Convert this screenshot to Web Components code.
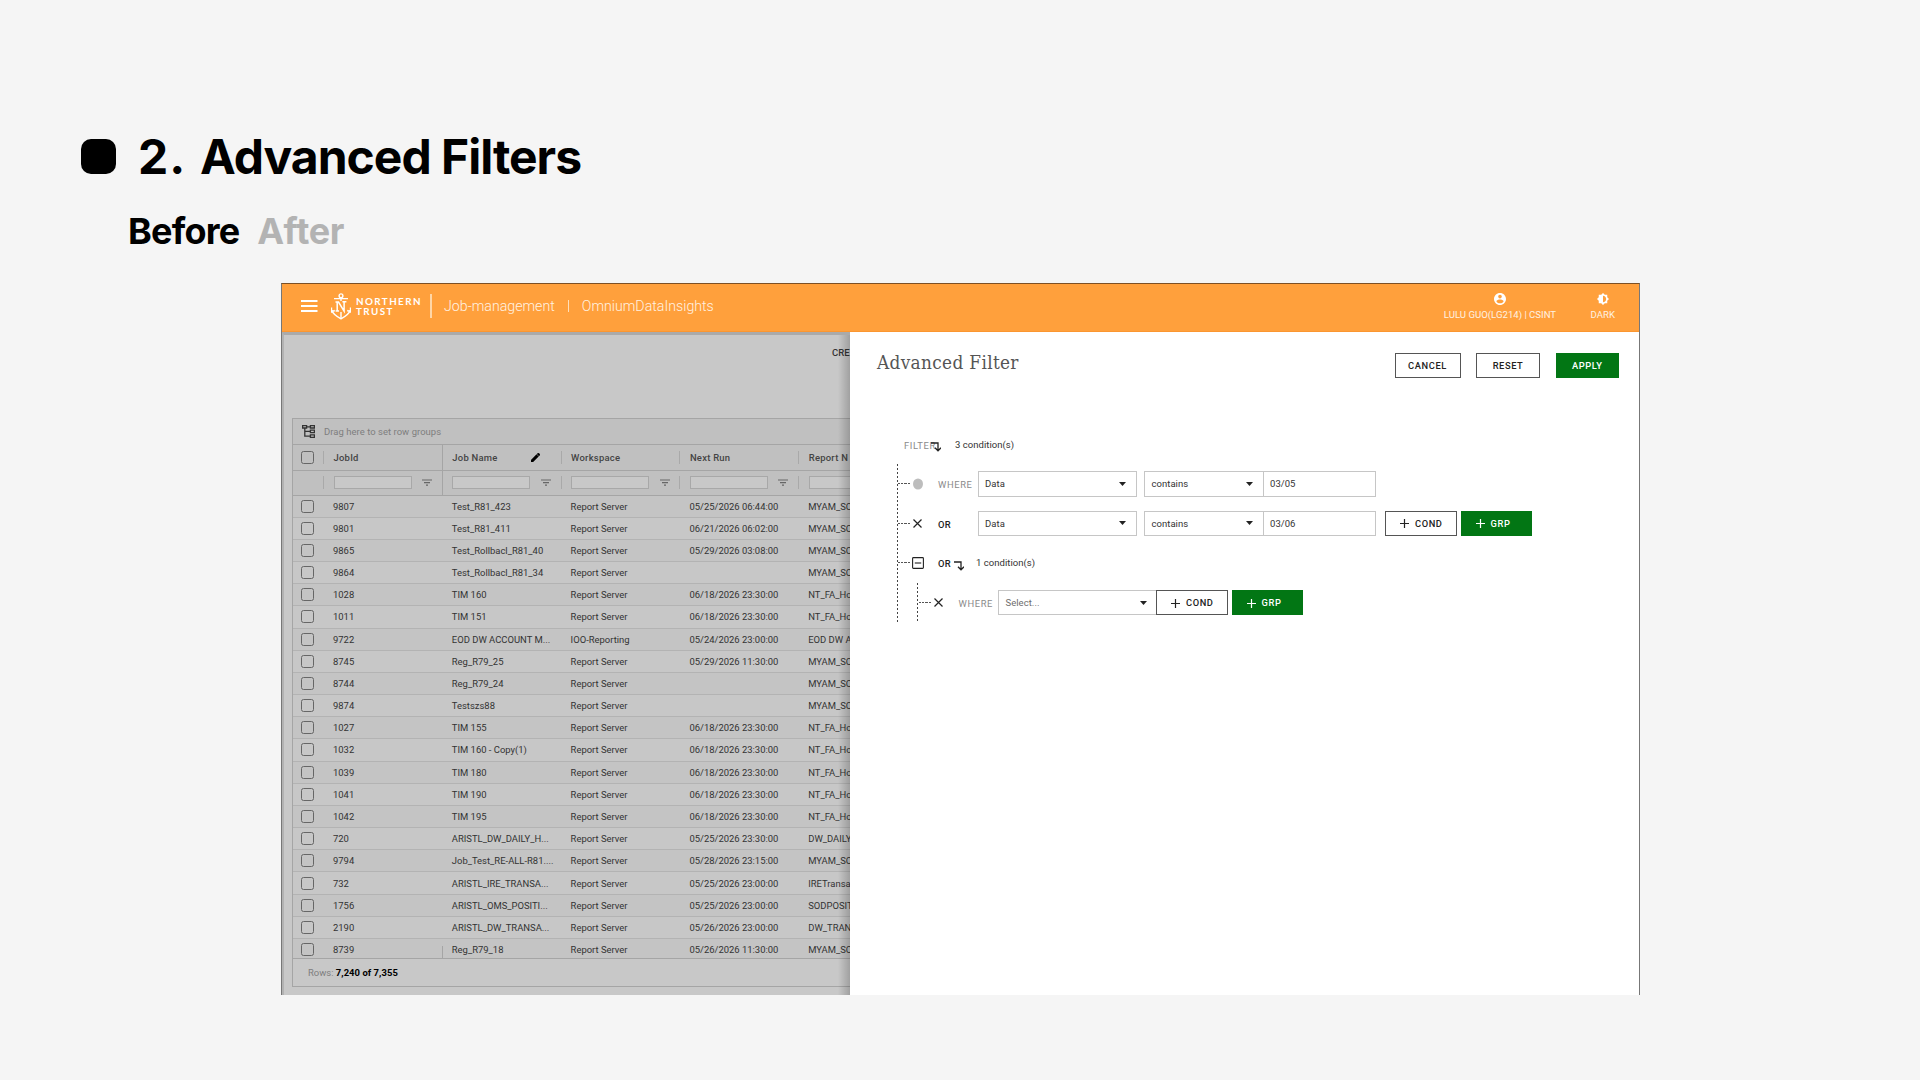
<!DOCTYPE html>
<html lang="en">
<head>
<meta charset="utf-8">
<title>Advanced Filters</title>
<style>
  body {
    margin: 0;
    width: 1920px;
    height: 1080px;
    overflow: hidden;
    background: #f5f5f5;
    font-family: Roboto, "Liberation Sans", sans-serif;
  }
</style>
</head>
<body>
<case-slide>
  <slide-heading number="2.">Advanced Filters</slide-heading>
  <slide-tabs active="Before" other="After"></slide-tabs>
  <app-window></app-window>
</case-slide>

<script>
const define = (name, template) => {
  customElements.define(name, class extends HTMLElement {
    constructor() {
      super();
      this._shadowDOM = this.attachShadow({ mode: 'open' });
    }

    connectedCallback() {
      this._shadowDOM.innerHTML = template(this);
    }
  });
};

define('case-slide', () => `
  <style>
    :host { display: flex; flex-direction: column; height: 1080px; }
  </style>
  <slot></slot>
`);

define('slide-heading', (el) => `
  <style>
    :host {
      display: flex;
      align-items: center;
      height: 58px;
      padding: 128px 0 0 81px;
      font: 700 48px/58px Inter, sans-serif;
      color: #000;
      white-space: nowrap;
    }
    .mark { width: 35px; height: 35px; border-radius: 10px; background: #000; margin: -2px 22px 0 0; }
    .number { width: 62px; letter-spacing: 1px; }
    .title { letter-spacing: -1px; }
  </style>
  <span class="mark"></span>
  <span class="number">${el.getAttribute('number')}</span>
  <span class="title"><slot></slot></span>
`);

define('slide-tabs', (el) => `
  <style>
    :host {
      display: flex;
      height: 44px;
      padding: 23px 0 0 128px;
      gap: 18px;
      font: 700 36px/44px Inter, sans-serif;
      letter-spacing: -.8px;
      color: #000;
    }
    .other { color: #b3b3b3; letter-spacing: -.3px; }
  </style>
  <span>${el.getAttribute('active')}</span>
  <span class="other">${el.getAttribute('other')}</span>
`);

define('app-window', () => `
  <style>
    :host {
      display: flex;
      flex-direction: column;
      box-sizing: border-box;
      width: 1359px;
      height: 712px;
      margin: 30px 0 0 281px;
      border: 1px solid #777;
      border-top-color: #7d5024;
      border-bottom: none;
      overflow: hidden;
    }
    .body { display: flex; flex: 1; min-height: 0; }
  </style>
  <app-header></app-header>
  <div class="body">
    <job-page></job-page>
    <filter-panel></filter-panel>
  </div>
`);

define('app-header', () => `
  <style>
    :host {
      display: flex;
      align-items: center;
      box-sizing: border-box;
      height: 47.500px;
      padding: 0 24px 0 19px;
      background: #ffa03c;
      border-bottom: 1px solid #fb9630;
      color: #fff2e2;
      white-space: nowrap;
    }
    .menu { display: block; margin-right: 13px; margin-top: -2px; }
    .logo { display: block; margin-right: 5px; margin-top: -2px; }
    .brand {
      width: 74px;
      margin-top: -1px;
      font: 700 9.800px/9.800px Lato, sans-serif;
      letter-spacing: 1.420px;
      color: #fff;
    }
    .rule { width: 2px; height: 24px; margin: -2px 12px 0 0; background: #ffd6a6; }
    .crumbs { display: flex; align-items: center; gap: 13px; font-size: 14.200px; font-weight: 300; margin-top: -2px; }
    .crumbs i { width: 1px; height: 12px; background: #ffdfba; }
    .actions { display: flex; margin-left: auto; gap: 34.500px; font-size: 9.600px; line-height: 12px; margin-top: -1px; }
    .action { display: flex; flex-direction: column; align-items: center; gap: 4px; }
    .action svg { display: block; }
  </style>
  <svg class="menu" width="17" height="12" viewBox="0 0 17 12"><path d="M0 1h16.500M0 6h16.500M0 11h16.500" stroke="#fff" stroke-width="2"/></svg>
  <svg class="logo" width="20" height="27" viewBox="0 0 20 27" fill="none" stroke="#fff" stroke-width="1.400">
    <circle cx="10" cy="2.800" r="1.900"/>
    <path d="M3 5.600h14M10 5v3M10 19v6"/>
    <path d="M6.200 17.800V9.400M4.500 9h3l5.600 9.200V8.800M11.400 8.800h4M4.600 17.900h3.400" stroke-width="1.500"/>
    <path d="M1 17.200c.6 3.800 4.200 6.100 9 8.600 4.800-2.500 8.400-4.800 9-8.600M.5 14.500v4.200l3.300-1.200M19.500 14.500v4.200l-3.300-1.200"/>
  </svg>
  <div class="brand">NORTHERN<br>TRUST</div>
  <span class="rule"></span>
  <div class="crumbs"><span>Job-management</span><i></i><span>OmniumDataInsights</span></div>
  <div class="actions">
    <div class="action">
      <svg width="12" height="12" viewBox="2 2 20 20"><path fill="#fff" d="M12 2C6.480 2 2 6.480 2 12s4.480 10 10 10 10-4.480 10-10S17.520 2 12 2zm0 3c1.660 0 3 1.340 3 3s-1.340 3-3 3-3-1.340-3-3 1.340-3 3-3zm0 14.200c-2.500 0-4.710-1.280-6-3.220.03-1.990 4-3.080 6-3.080 1.990 0 5.970 1.090 6 3.080-1.290 1.940-3.500 3.220-6 3.220z"/></svg>
      <span>LULU GUO(LG214) | CSINT</span>
    </div>
    <div class="action">
      <svg width="12" height="12" viewBox="0.700 0.700 22.600 22.600"><path fill="#fff" fill-rule="evenodd" d="M20 8.690V4h-4.690L12 .690 8.690 4H4v4.690L.690 12 4 15.310V20h4.690L12 23.310 15.310 20H20v-4.690L23.310 12 20 8.690zM12 18V6c3.310 0 6 2.690 6 6s-2.690 6-6 6z"/></svg>
      <span>DARK</span>
    </div>
  </div>
`);

define('job-page', () => `
  <style>
    :host {
      position: relative;
      display: flex;
      flex-direction: column;
      box-sizing: border-box;
      width: 568px;
      flex: none;
      overflow: hidden;
      background: #c8c8c8;
      border-top: 3px solid #aaa;
      border-left: 2px solid #b2b2b2;
    }
    .toolbar {
      height: 83px;
      box-sizing: border-box;
      padding: 12px 0 0 548px;
      font-size: 9.500px;
      font-weight: 500;
      line-height: 12px;
      color: #333;
      white-space: nowrap;
    }
    /* shade cast by the open drawer */
    .shade {
      position: absolute;
      top: 0;
      right: 0;
      bottom: 0;
      width: 12px;
      background: linear-gradient(to right, transparent, rgba(0, 0, 0, .2));
    }
  </style>
  <div class="toolbar">CRE</div>
  <job-grid></job-grid>
  <div class="shade"></div>
`);

const jobs = [
  ['9807', 'Test_R81_423', 'Report Server', '05/25/2026 06:44:00', 'MYAM_SC'],
  ['9801', 'Test_R81_411', 'Report Server', '06/21/2026 06:02:00', 'MYAM_SC'],
  ['9865', 'Test_Rollbacl_R81_40', 'Report Server', '05/29/2026 03:08:00', 'MYAM_SC'],
  ['9864', 'Test_Rollbacl_R81_34', 'Report Server', '', 'MYAM_SC'],
  ['1028', 'TIM 160', 'Report Server', '06/18/2026 23:30:00', 'NT_FA_Ho'],
  ['1011', 'TIM 151', 'Report Server', '06/18/2026 23:30:00', 'NT_FA_Ho'],
  ['9722', 'EOD DW ACCOUNT M...', 'IOO-Reporting', '05/24/2026 23:00:00', 'EOD DW A'],
  ['8745', 'Reg_R79_25', 'Report Server', '05/29/2026 11:30:00', 'MYAM_SC'],
  ['8744', 'Reg_R79_24', 'Report Server', '', 'MYAM_SC'],
  ['9874', 'Testszs88', 'Report Server', '', 'MYAM_SC'],
  ['1027', 'TIM 155', 'Report Server', '06/18/2026 23:30:00', 'NT_FA_Ho'],
  ['1032', 'TIM 160 - Copy(1)', 'Report Server', '06/18/2026 23:30:00', 'NT_FA_Ho'],
  ['1039', 'TIM 180', 'Report Server', '06/18/2026 23:30:00', 'NT_FA_Ho'],
  ['1041', 'TIM 190', 'Report Server', '06/18/2026 23:30:00', 'NT_FA_Ho'],
  ['1042', 'TIM 195', 'Report Server', '06/18/2026 23:30:00', 'NT_FA_Ho'],
  ['720', 'ARISTL_DW_DAILY_H...', 'Report Server', '05/25/2026 23:30:00', 'DW_DAILY'],
  ['9794', 'Job_Test_RE-ALL-R81....', 'Report Server', '05/28/2026 23:15:00', 'MYAM_SC'],
  ['732', 'ARISTL_IRE_TRANSA...', 'Report Server', '05/25/2026 23:00:00', 'IRETransa'],
  ['1756', 'ARISTL_OMS_POSITI...', 'Report Server', '05/25/2026 23:00:00', 'SODPOSIT'],
  ['2190', 'ARISTL_DW_TRANSA...', 'Report Server', '05/26/2026 23:00:00', 'DW_TRAN'],
  ['8739', 'Reg_R79_18', 'Report Server', '05/26/2026 11:30:00', 'MYAM_SC'],
];

const pencil = '<svg class="pencil" width="9" height="9" viewBox="3 3 18 18"><path d="M3 17.250V21h3.750L17.810 9.940l-3.750-3.750L3 17.250zM20.710 7.040c.390-.390.390-1.020 0-1.410l-2.340-2.340c-.390-.390-1.020-.390-1.410 0l-1.830 1.830 3.750 3.750 1.830-1.830z" stroke="#000" stroke-width="1"/></svg>';
const funnel = '<svg width="10" height="7" viewBox="0 0 10 7"><path d="M0 1h10M2 3.600h6M4 6.200h2" stroke="#666" stroke-width="1.200"/></svg>';
const headings = ['JobId', `Job Name${pencil}`, 'Workspace', 'Next Run', 'Report N'];

define('job-grid', () => `
  <style>
    :host {
      display: flex;
      flex-direction: column;
      box-sizing: border-box;
      width: 700px;
      height: 569px;
      margin-left: 8px;
      border: 1px solid #a5a5a5;
      font-size: 9.450px;
      color: #333;
      white-space: nowrap;
    }
    .groups {
      display: flex;
      align-items: center;
      gap: 9px;
      height: 25px;
      padding-left: 9px;
      background: #c0c0c0;
      border-bottom: 1px solid #a5a5a5;
      color: #7e7e7e;
      letter-spacing: .05px;
    }
    .line { display: flex; box-sizing: border-box; background: #c0c0c0; border-bottom: 1px solid #a5a5a5; }
    .head { height: 26px; font-weight: 500; letter-spacing: .25px; color: #444; }
    .filters { height: 25px; }
    .line > * { display: flex; align-items: center; box-sizing: border-box; width: 118.800px; padding-left: 9.500px; flex: none; }
    .line > :first-child { width: 31px; padding-left: 8px; }
    /* short separators between the column headings */
    .line > * { background: linear-gradient(#a9a9a9, #a9a9a9) right center / 1px 13px no-repeat; }
    .line > :nth-child(2) { border-right: 1px solid #a5a5a5; background: none; }
    .pencil { margin-left: auto; margin-right: 22px; fill: #000; }
    .input { width: 78px; height: 13px; box-sizing: border-box; background: #c8c8c8; border: 1px solid #a8a8a8; margin-right: 10.500px; }
    .check { width: 13px; height: 13px; box-sizing: border-box; border: 1px solid #666; border-radius: 2.500px; }
    .rows { height: 463px; overflow: hidden; flex: none; border-bottom: 1px solid #a5a5a5; box-sizing: border-box; }
    .row {
      display: flex;
      align-items: center;
      box-sizing: border-box;
      height: 22.180px;
      border-bottom: 1px solid #b3b3b3;
      background: #c7c7c7;
    }
    .row:nth-child(odd) { background: #c4c4c4; }
    .row > * { width: 118.800px; flex: none; }
    .row > .check { width: 13px; margin: 0 19px 0 8px; }
    /* tail of the pinned column divider */
    .row:last-child > :nth-child(2) { background: linear-gradient(#a5a5a5, #a5a5a5) 109px 100% / 1px 14px no-repeat; align-self: stretch; line-height: 21px; }
    .footer { padding: 7px 0 0 15px; line-height: 14px; color: #7e7e7e; }
    .footer b { color: #000; font-weight: 700; letter-spacing: .05px; }
  </style>
  <div class="groups">
    <svg width="13" height="13" viewBox="0 0 13 13" fill="none" stroke="#333" stroke-width="1.300">
      <path d="M.6.600h4v2.400h-4zM8.400.600h4v2.400h-4zM8.400 5.200h4v2.400h-4zM8.400 9.900h4v2.400h-4zM4.600 1.800h3.800M2.800 3v8.100h5.600M2.800 6.400h5.600"/>
    </svg>
    <span>Drag here to set row groups</span>
  </div>
  <div class="line head">
    <span><i class="check"></i></span>${headings.map((h) => `<span>${h}</span>`).join('')}
  </div>
  <div class="line filters">
    <span></span>${headings.map(() => `<span><i class="input"></i>${funnel}</span>`).join('')}
  </div>
  <div class="rows">
    ${jobs.map((job) => `<div class="row"><i class="check"></i>${job.map((v) => `<span>${v}</span>`).join('')}</div>`).join('')}
  </div>
  <div class="footer">Rows: <b>7,240 of 7,355</b></div>
`);

define('action-button', (el) => `
  <style>
    :host {
      display: flex;
      align-items: center;
      justify-content: center;
      box-sizing: border-box;
      height: 25.500px;
      border: 1px solid #555;
      background: #fff;
      font-size: 9.300px;
      font-weight: 500;
      letter-spacing: .6px;
      color: #222;
      flex: none;
    }
    :host([primary]) { background: #027614; border-color: #027614; color: #fff; }
    svg { display: block; margin: 1px 6px 0 0; }
    :host([plus]) { width: 71.500px; justify-content: flex-start; padding-left: 14px; }
  </style>
  ${el.hasAttribute('plus') ? '<svg width="9" height="9" viewBox="0 0 9 9"><path d="M4.500 0v9M0 4.500h9" stroke="currentColor" stroke-width="1.200"/></svg>' : ''}
  <slot></slot>
`);

define('filter-panel', () => `
  <style>
    :host { display: block; flex: 1; background: #fff; color: #333; }
    .top { display: flex; align-items: flex-start; box-sizing: border-box; padding: 20px 20px 0 27px; height: 101.500px; }
    h1 {
      margin: 0 auto 0 0;
      font: 300 18.800px/22px "Roboto Slab", "DejaVu Serif Condensed", "DejaVu Serif", serif;
      letter-spacing: .35px;
      color: #555;
    }
    .buttons { display: flex; gap: 15.500px; padding-top: 1px; }
    .cancel { width: 66px; }
    .reset { width: 64px; }
    .apply { width: 63.500px; }
  </style>
  <div class="top">
    <h1>Advanced Filter</h1>
    <div class="buttons">
      <action-button class="cancel">CANCEL</action-button>
      <action-button class="reset">RESET</action-button>
      <action-button class="apply" primary>APPLY</action-button>
    </div>
  </div>
  <filter-tree></filter-tree>
`);

define('select-box', () => `
  <style>
    :host {
      display: flex;
      align-items: center;
      justify-content: space-between;
      box-sizing: border-box;
      height: 25.500px;
      padding: 0 9.500px 0 6.500px;
      border: 1px solid #c6c6c6;
      background: #fff;
      flex: none;
    }
    :host([plain]) svg { display: none; }
  </style>
  <span><slot></slot></span>
  <svg width="7" height="4" viewBox="0 0 7 4"><path d="M0 0h7L3.500 4z" fill="#222"/></svg>
`);

const turn = '<svg class="turn" width="10" height="10" viewBox="0 0 10 10" fill="none" stroke="#222" stroke-width="1.300"><path d="M0 1h7v7.500M4 5.800l3 3 3-3"/></svg>';
const cross = '<svg width="9" height="9" viewBox="0 0 9 9"><path d="M.5.500l8 8M8.500.500l-8 8" stroke="#222" stroke-width="1.200"/></svg>';
const collapse = '<svg width="12" height="12" viewBox="0 0 12 12" fill="none" stroke="#222" stroke-width="1.100"><rect x=".6" y=".6" width="10.800" height="10.800" rx=".8"/><path d="M2.800 6h6.400"/></svg>';
const dot = '<svg width="10" height="12" viewBox="0 0 10 12"><ellipse cx="5" cy="6" rx="5" ry="5.600" fill="#bdbdbd"/></svg>';
const addButtons = '<action-button plus>COND</action-button><action-button class="grp" plus primary>GRP</action-button>';

define('filter-tree', () => `
  <style>
    :host { display: block; padding-left: 46.500px; font-size: 9.500px; letter-spacing: .04px; white-space: nowrap; }
    .root { display: flex; align-items: center; height: 22px; padding-left: 7.500px; }
    .root .key { width: 27px; margin-top: 3px; }
    .root .turn { margin: 5px 14px 0 0; }
    .key { color: #8a8a8a; letter-spacing: .6px; font-size: 9.400px; }
    .key.or { color: #222; font-weight: 500; letter-spacing: .3px; }
    .branch {
      background: repeating-linear-gradient(to bottom, #444 0 2.400px, transparent 2.400px 4px) 0 0 / 1.400px 100% no-repeat;
    }
    .main { margin-top: 9px; height: 158.500px; }
    .item { display: flex; align-items: center; height: 39.600px; }
    .stub {
      width: 12px;
      height: 1px;
      margin-left: 1.500px;
      background: repeating-linear-gradient(to right, #555 0 2.200px, transparent 2.200px 3.200px);
    }
    .icon { display: flex; justify-content: center; width: 15px; }
    .item .key { width: 39.500px; margin: 2px 0 0 13px; }
    .field { width: 159px; margin-right: 7.500px; }
    .op { width: 119.500px; margin-right: -1px; }
    .value { width: 113.500px; margin-right: 9px; }
    .grp { margin-left: 4px; }
    .item .short { width: 16.500px; margin-left: 13px; }
    .item .turn { margin: 7px 12.500px 0 -1px; }
    .nested { margin-left: 20.500px; height: 39.600px; }
    .nested .field { margin-right: -1px; color: #6d6d6d; }
  </style>
  <div class="root"><span class="key">FILTER</span>${turn}<span>3 condition(s)</span></div>
  <div class="branch main">
    <div class="item">
      <i class="stub"></i><span class="icon">${dot}</span><span class="key">WHERE</span>
      <select-box class="field">Data</select-box><select-box class="op">contains</select-box><select-box class="value" plain>03/05</select-box>
    </div>
    <div class="item">
      <i class="stub"></i><span class="icon">${cross}</span><span class="key or">OR</span>
      <select-box class="field">Data</select-box><select-box class="op">contains</select-box><select-box class="value" plain>03/06</select-box>${addButtons}
    </div>
    <div class="item">
      <i class="stub"></i><span class="icon">${collapse}</span><span class="key or short">OR</span>${turn}<span>1 condition(s)</span>
    </div>
    <div class="branch nested">
      <div class="item">
        <i class="stub"></i><span class="icon">${cross}</span><span class="key">WHERE</span>
        <select-box class="field">Select...</select-box>${addButtons}
      </div>
    </div>
  </div>
`);
</script>
</body>
</html>
